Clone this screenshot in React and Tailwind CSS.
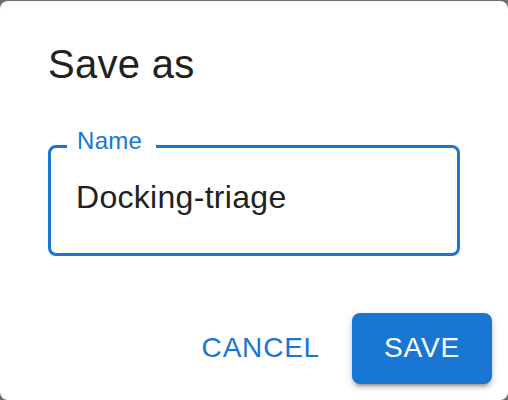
import { useState } from "react";

export default function App() {
  const [name, setName] = useState("Docking-triage");

  return (
    <div className="w-[508px] h-[400px] overflow-hidden bg-[#6e6e6e] pt-px font-['Liberation_Sans',Arial,sans-serif]">
      <div className="h-[399px] bg-white rounded-[8px] flex flex-col text-[#212121]">
        <h2 className="px-12 pt-[31px] pb-8 text-[40px] leading-[64px] font-normal tracking-[0.3px]">
          Save as
        </h2>

        <div className="px-12">
          <div className="relative mt-[17px] h-[111px] rounded-[8px] border-[3px] border-[#1976d2]">
            <span className="absolute left-[16px] top-[-19px] pl-[10px] pr-[14px] bg-white text-[24px] leading-[24px] tracking-[0.3px] text-[#1976d2]">
              Name
            </span>
            <input
              value={name}
              onChange={(e) => setName(e.target.value)}
              className="w-full bg-transparent outline-none pl-[25px] pr-[25px] pt-[31px] text-[32px] leading-[32px] text-[#212121] tracking-[0.3px]"
            />
          </div>
        </div>

        <div className="mt-auto flex justify-end items-center p-4">
          <button className="px-4 h-[72px] rounded-[8px] text-[28px] font-normal uppercase tracking-[0.8px] text-[#1976d2]">
            Cancel
          </button>
          <button className="ml-4 w-[140px] h-[71px] rounded-[8px] bg-[#1976d2] text-white text-[28px] font-normal uppercase tracking-[0.8px] shadow-[0_6px_2px_-4px_rgba(0,0,0,0.2),0_4px_4px_0_rgba(0,0,0,0.14),0_2px_10px_0_rgba(0,0,0,0.12)]">
            Save
          </button>
        </div>
      </div>
    </div>
  );
}
